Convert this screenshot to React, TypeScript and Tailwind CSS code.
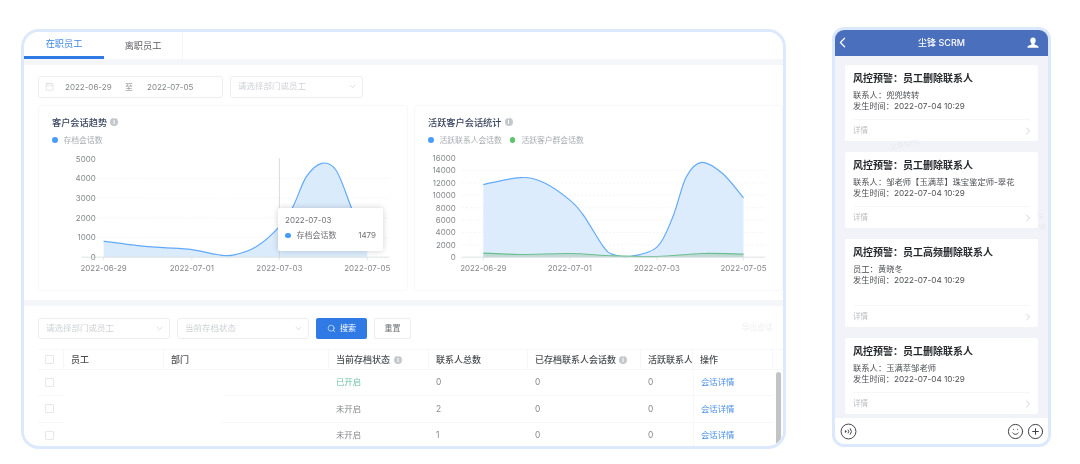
import { Calendar, ChevronDown, ChevronLeft, ChevronRight, CirclePlus, Search, Smile } from "lucide-react";

type Pt = [number, number];

const FONT = "font-['Inter','Noto_Sans_CJK_SC',sans-serif]";

// points are in page pixels, the chart svgs use a matching viewBox
const trendLine: Pt[] = [
  [103, 241.3], [140, 246], [163, 247.7], [191.7, 249.7], [216.7, 254.7], [233, 255.4], [256.7, 246.7],
  [279.7, 226.7], [293.3, 206.7], [306.7, 176.7], [322.3, 163], [336.7, 170], [351.7, 206.7], [368, 250],
];
const activeLine: Pt[] = [
  [482.7, 184.3], [520, 177.3], [543.3, 182.3], [569.7, 200], [583.3, 215], [603.3, 246.7], [613.3, 254.7],
  [630, 256.7], [657.3, 247.3], [673.3, 216.7], [686.7, 176.7], [702.3, 162], [723.3, 173.3], [744.3, 197.7],
];
const groupLine: Pt[] = [
  [482.7, 253.3], [520, 254.7], [569.7, 253.7], [613.3, 256], [657.3, 256.7], [702.3, 253.7], [744.3, 254.3],
];

function smooth(pts: Pt[]) {
  let d = `M${pts[0][0]} ${pts[0][1]}`;
  for (let i = 0; i < pts.length - 1; i++) {
    const p0 = pts[i - 1] ?? pts[i];
    const p1 = pts[i];
    const p2 = pts[i + 1];
    const p3 = pts[i + 2] ?? p2;
    d += `C${p1[0] + (p2[0] - p0[0]) / 6} ${p1[1] + (p2[1] - p0[1]) / 6} ${p2[0] - (p3[0] - p1[0]) / 6} ${p2[1] - (p3[1] - p1[1]) / 6} ${p2[0]} ${p2[1]}`;
  }
  return d;
}

function area(pts: Pt[], base: number) {
  return `${smooth(pts)}L${pts[pts.length - 1][0]} ${base}L${pts[0][0]} ${base}Z`;
}

function Info() {
  return (
    <span className="inline-flex h-[8px] w-[8px] items-center justify-center rounded-full bg-[#c4c7cc] text-[6px] font-bold leading-none text-white">
      i
    </span>
  );
}

function Select({ text, w }: { text: string; w: string }) {
  return (
    <div className={`flex h-[21.5px] items-center justify-between rounded-[3px] border border-[#eceef3] bg-white pl-[7px] pr-[5px] text-[8.5px] text-[#cfd1d6] ${w}`}>
      <span>{text}</span>
      <ChevronDown className="h-[9px] w-[9px] text-[#cfd1d6]" />
    </div>
  );
}

function Chart({
  viewBox, x0, x1, labelX, rows, ticks, children,
}: {
  viewBox: string; x0: number; x1: number; labelX: number;
  rows: { y: number; label: string }[]; ticks: number[]; children: React.ReactNode;
}) {
  const dates = ["2022-06-29", "2022-07-01", "2022-07-03", "2022-07-05"];
  return (
    <svg viewBox={viewBox} className="block h-[140px] w-full">
      {rows.slice(1).map((r) => (
        <line key={r.label} x1={x0} x2={x1} y1={r.y} y2={r.y} stroke="#f1f2f4" strokeWidth="0.8" strokeDasharray="2 2" />
      ))}
      {children}
      <line x1={x0} x2={x1} y1={257.4} y2={257.4} stroke="#dcdee2" strokeWidth="0.8" />
      {rows.map((r) => (
        <text key={r.label} x={labelX} y={r.y + 3} textAnchor="end" fontSize="8" fill="#85878b">{r.label}</text>
      ))}
      {ticks.map((t, i) => (
        <g key={t}>
          <line x1={t} x2={t} y1={257.4} y2={260.4} stroke="#dcdee2" strokeWidth="0.8" />
          <text x={t} y={271} textAnchor="middle" fontSize="8" fill="#85878b">{dates[i]}</text>
        </g>
      ))}
    </svg>
  );
}

function Dot({ color }: { color: string }) {
  return <span className={`h-[5.5px] w-[5.5px] rounded-full ${color}`} />;
}

const leftRows = [5000, 4000, 3000, 2000, 1000, 0].map((v) => ({ y: 257.4 - (v / 1000) * 19.8, label: String(v) }));
const rightRows = [16000, 14000, 12000, 10000, 8000, 6000, 4000, 2000, 0].map((v) => ({ y: 257.4 - (v / 2000) * 12.45, label: String(v) }));

function Filters() {
  return (
    <div className="flex items-center gap-[7px]">
      <div className="flex h-[21.5px] w-[185px] items-center rounded-[3px] border border-[#eceef3] pl-[6px] text-[8px] text-[#85878c]">
        <Calendar className="h-[9px] w-[9px] text-[#c9cbd0]" strokeWidth={1.2} />
        <span className="ml-[11px] w-[60px]">2022-06-29</span>
        <span className="w-[22px]">至</span>
        <span>2022-07-05</span>
      </div>
      <Select text="请选择部门或员工" w="w-[133px]" />
    </div>
  );
}

function TrendCard() {
  return (
    <div className="relative w-[370px] rounded-[3px] border border-[#f7f8fa]">
      <div className="flex h-[44.5px] flex-col gap-[6px] pl-[13px] pt-[10px]">
        <div className="flex items-center gap-[3px] text-[9.2px] font-medium leading-[13px] text-[#3a4560]">
          客户会话趋势 <Info />
        </div>
        <div className="flex items-center gap-[6px] text-[7.8px] leading-[11px] text-[#a9abb0]">
          <Dot color="bg-[#4a9bf8]" />
          存档会话数
        </div>
      </div>
      <Chart viewBox="38 150 370 140" x0={81} x1={390} labelX={95} rows={leftRows} ticks={[103, 191.7, 279.7, 368]}>
        <path d={area(trendLine, 257.4)} fill="#daebfc" />
        <path d={smooth(trendLine)} fill="none" stroke="#62aaf8" strokeWidth="1.2" />
        <line x1={279.7} x2={279.7} y1={158} y2={257.4} stroke="#cfd0d3" strokeWidth="0.8" />
      </Chart>
      {/* tooltip */}
      <div className="absolute left-[239px] top-[102.5px] h-[43px] w-[105px] rounded-[2px] bg-white px-[7px] pt-[7px] text-[8px] text-[#707277] shadow-[0_0_6px_rgba(0,0,0,0.18)]">
        <div className="leading-[11px]">2022-07-03</div>
        <div className="mt-[4px] flex items-center leading-[11px]">
          <Dot color="bg-[#4a9bf8]" />
          <span className="ml-[6px] flex-1">存档会话数</span>
          <span>1479</span>
        </div>
      </div>
    </div>
  );
}

function ActiveCard() {
  return (
    <div className="w-[369px] rounded-[3px] border border-[#f7f8fa]">
      <div className="flex h-[44.5px] flex-col gap-[6px] pl-[13px] pt-[10px]">
        <div className="flex items-center gap-[3px] text-[9.2px] font-medium leading-[13px] text-[#3a4560]">
          活跃客户会话统计 <Info />
        </div>
        <div className="flex items-center text-[7.8px] leading-[11px] text-[#a9abb0]">
          <Dot color="bg-[#4a9bf8]" />
          <span className="ml-[6px]">活跃联系人会话数</span>
          <span className="ml-[8px]"><Dot color="bg-[#5cc469] inline-block" /></span>
          <span className="ml-[6px]">活跃客户群会话数</span>
        </div>
      </div>
      <Chart viewBox="414 150 369 140" x0={461} x1={766} labelX={455} rows={rightRows} ticks={[482.7, 569.7, 657.3, 744.3]}>
        <path d={area(activeLine, 257.4)} fill="#dcecfd" />
        <path d={smooth(activeLine)} fill="none" stroke="#62aaf8" strokeWidth="1.2" />
        <path d={area(groupLine, 257.4)} fill="#bfd9d6" />
        <path d={smooth(groupLine)} fill="none" stroke="#6cc08e" strokeWidth="1.2" />
      </Chart>
    </div>
  );
}

const GRID = "grid grid-cols-[26px_100px_165px_100px_99px_113px_52px_80px_10px]";
const tableRows = [
  { state: "已开启", on: true, total: "0" },
  { state: "未开启", on: false, total: "2" },
  { state: "未开启", on: false, total: "1" },
];

function Checkbox() {
  return <span className="h-[9px] w-[9px] rounded-[1px] border border-[#e6e7ea] bg-white" />;
}

function EmployeeTable() {
  const head = "flex items-center border-b border-r border-[#f6f7f8] pl-[7px]";
  const cell = "flex items-center border-b border-[#f6f7f8] pl-[7px]";
  return (
    <div className="relative mt-[10px] text-[8.4px] text-[#85878c]">
      <div className={`${GRID} h-[21px] border-t border-[#f8f9fa] text-[9px] font-medium text-[#4b4d52]`}>
        <div className={`${head} pl-[7px]`}><Checkbox /></div>
        <div className={head}>员工</div>
        <div className={head}>部门</div>
        <div className={`${head} gap-[4px]`}>当前存档状态 <Info /></div>
        <div className={head}>联系人总数</div>
        <div className={`${head} gap-[3px]`}>已存档联系人会话数 <Info /></div>
        <div className={`${head} overflow-hidden whitespace-nowrap`}>活跃联系人</div>
        <div className={head}>操作</div>
        <div className="border-b border-[#f6f7f8]" />
      </div>
      {tableRows.map((r) => (
        <div key={r.total} className={`${GRID} h-[26.3px]`}>
          <div className={cell}><Checkbox /></div>
          <div />
          <div className="ml-[59px] border-b border-[#f6f7f8]" />
          <div className={`${cell} ${r.on ? "text-[#6cc4a0]" : ""}`}>{r.state}</div>
          <div className={cell}>{r.total}</div>
          <div className={cell}>0</div>
          <div className={cell}>0</div>
          <div className={`${cell} border-l text-[#4a90e8]`}>会话详情</div>
          <div />
        </div>
      ))}
      <div className="absolute right-[2px] top-[23px] h-[80px] w-[5px] rounded-full bg-[#c2c3c5]" />
    </div>
  );
}

function MainWindow() {
  return (
    <div className="flex h-[420px] w-[765px] flex-col gap-[6px] overflow-hidden rounded-[18px] border-[3px] border-[#dce8fc] bg-[#f4f6fa]">
      <div className="flex h-[27px] shrink-0 bg-white text-[9.2px]">
        <div className="flex w-[80px] items-center justify-center border-b-[3px] border-[#2f7ae5] text-[#3f86e8]">在职员工</div>
        <div className="flex w-[79px] items-center justify-center border-r border-[#f4f5f7] text-[#5a5c61]">离职员工</div>
      </div>
      <div className="flex h-[235px] shrink-0 flex-col gap-[7px] bg-white pl-[14px] pt-[11px]">
        <Filters />
        <div className="flex h-[186px] gap-[6px]">
          <TrendCard />
          <ActiveCard />
        </div>
      </div>
      <div className="flex-1 bg-white pl-[14px] pt-[11.5px]">
        <div className="flex items-center gap-[7px]">
          <Select text="请选择部门或员工" w="w-[132px]" />
          <Select text="当前存档状态" w="w-[132px]" />
          <div className="flex h-[21.5px] w-[51px] items-center justify-center gap-[4px] rounded-[2px] bg-[#2f7ae5] text-[8px] text-white">
            <Search className="h-[9px] w-[9px]" strokeWidth={1.6} />
            搜索
          </div>
          <div className="flex h-[21.5px] w-[37px] items-center justify-center rounded-[2px] border border-[#eceef3] text-[8px] text-[#707277]">重置</div>
          <div className="ml-auto mr-[10px] text-[7.8px] text-[#eeefef]">导出会话</div>
        </div>
        <EmployeeTable />
      </div>
    </div>
  );
}

const alerts = [
  { title: "风控预警：员工删除联系人", who: "联系人：兜兜转转", tall: false },
  { title: "风控预警：员工删除联系人", who: "联系人：邹老师【玉满萃】珠宝鉴定师-翠花", tall: false },
  { title: "风控预警：员工高频删除联系人", who: "员工：黄晓冬", tall: true },
  { title: "风控预警：员工删除联系人", who: "联系人：玉满萃邹老师", tall: false },
];

function AlertCard({ title, who, tall }: { title: string; who: string; tall: boolean }) {
  return (
    <div className={`relative flex w-[193px] shrink-0 flex-col rounded-[2px] bg-white px-[8px] ${tall ? "h-[88px]" : "h-[76px]"}`}>
      <div className="pt-[7px] text-[10px] font-semibold leading-[13px] text-[#26282c]">{title}</div>
      <div className="mt-[4.5px] text-[8.3px] leading-[11.3px] text-[#4d4f54]">
        <div>{who}</div>
        <div className="text-[8.2px]">发生时间：2022-07-04 10:29</div>
      </div>
      <div className="mt-auto flex h-[22px] items-center justify-between border-t border-[#f7f7f8] text-[7.5px] text-[#b9bbbf]">
        详情
        <ChevronRight className="mr-[-4px] h-[12px] w-[12px] text-[#b4b6ba]" strokeWidth={1.2} />
      </div>
    </div>
  );
}

function Phone() {
  return (
    <div className="flex h-[420px] w-[219px] flex-col overflow-hidden rounded-[12px] border-[3px] border-[#dce8fc] bg-[#f1f3f8]">
      <div className="grid h-[25.5px] shrink-0 grid-cols-[1fr_auto_1fr] items-center bg-[#4a6fbd] text-white">
        <ChevronLeft className="-ml-[1px] h-[17px] w-[17px]" strokeWidth={1.7} />
        <span className="text-[9px] font-medium">尘锋 SCRM</span>
        <svg viewBox="0 0 12 12" className="mr-[9px] h-[12px] w-[12px] justify-self-end" fill="#ffffff">
          <path d="M6 .6c-1.7 0-2.7 1.3-2.7 3 0 1.2.5 2.3 1.2 2.9v.9c-.9.5-3.5 1-3.9 2.2-.1.4-.1.8-.1 1.2h11c0-.4 0-.8-.1-1.2-.4-1.2-3-1.7-3.9-2.2v-.9c.7-.6 1.2-1.7 1.2-2.9 0-1.7-1-3-2.7-3Z" />
        </svg>
      </div>
      <div className="relative flex flex-1 flex-col gap-[11px] overflow-hidden pl-[10px] pt-[9.5px]">
        {alerts.map((a, i) => (
          <AlertCard key={i} {...a} />
        ))}
        {/* faint watermarks */}
        <span className="absolute left-[55px] top-[84px] -rotate-12 text-[7px] text-[#e8eaf0]">尘锋5216</span>
        <span className="absolute left-[203px] top-[155px] -rotate-12 text-[7px] text-[#e8eaf0]">尘锋</span>
      </div>
      <div className="flex h-[26px] shrink-0 items-center justify-between bg-white pl-[5px] pr-[4px] text-[#3d3f44]">
        <svg viewBox="0 0 16 16" className="h-[17px] w-[17px]" fill="none" stroke="currentColor" strokeWidth="0.9">
          <circle cx="8" cy="8" r="7" />
          <path d="M5 7.2 6 8 5 8.8Z" fill="currentColor" />
          <path d="M7.5 6.3a2.6 2.6 0 0 1 0 3.4M9.5 5a4.6 4.6 0 0 1 0 6" />
        </svg>
        <div className="flex items-center gap-[3.5px]">
          <Smile className="h-[17px] w-[17px]" strokeWidth={1.4} />
          <CirclePlus className="h-[17px] w-[17px]" strokeWidth={1.4} />
        </div>
      </div>
    </div>
  );
}

export default function App() {
  return (
    <div className={`${FONT} flex h-[464px] w-[1080px] items-start gap-[46px] overflow-hidden bg-white pl-[21px] pt-[29px] blur-[0.35px]`}>
      <MainWindow />
      <div className="-mt-[2px]">
        <Phone />
      </div>
    </div>
  );
}
